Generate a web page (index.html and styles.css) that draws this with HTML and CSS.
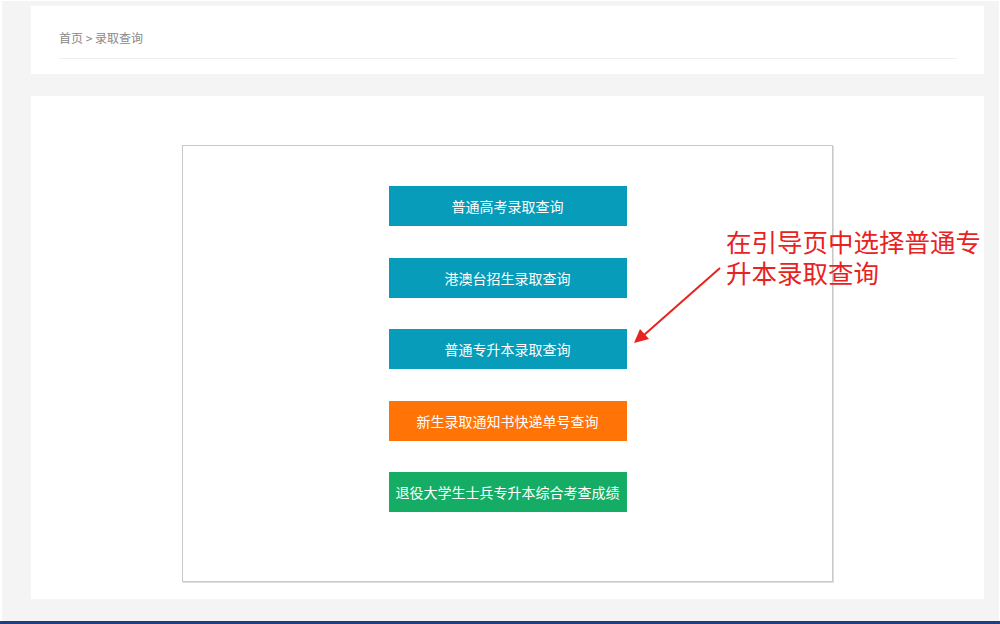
FILE: index.html
```html
<!DOCTYPE html>
<html lang="zh-CN">
<head>
    <meta charset="UTF-8">
    <meta name="viewport" content="width=device-width, initial-scale=1.0">
    <title>录取查询</title>
    <link rel="stylesheet" href="styles.css">
</head>
<body>
    <div class="page">
        <div class="top-card">
            <div class="crumb">首页 &gt; 录取查询</div>
        </div>
        <div class="panel">
            <div class="guide-box">
                <a class="query-btn teal" href="#">普通高考录取查询</a>
                <a class="query-btn teal" href="#">港澳台招生录取查询</a>
                <a class="query-btn teal" href="#">普通专升本录取查询</a>
                <a class="query-btn orange" href="#">新生录取通知书快递单号查询</a>
                <a class="query-btn green" href="#">退役大学生士兵专升本综合考查成绩</a>
            </div>
        </div>
    </div>
    <div class="footer-bar"></div>

    <p class="note">在引导页中选择普通专<br>升本录取查询</p>
    <svg class="note-arrow" width="1000" height="624" viewBox="0 0 1000 624">
        <line x1="720" y1="268" x2="644" y2="335" stroke="#e8221e" stroke-width="2"/>
        <polygon points="634,343 640,329 649,339" fill="#e8221e"/>
    </svg>
</body>
</html>
```

FILE: styles.css
```css
body {
    margin: 0;
    background-color: #fff;
    font-family: "Noto Sans CJK SC", "Noto Sans", sans-serif;
    position: relative;
    height: 624px;
    overflow: hidden;
}
.page {
    background-color: #f4f4f4;
    margin: 1px 1px 0 2px;
    padding: 5px 15px 22px 29px;
}
.top-card {
    background-color: #fff;
    padding: 0 27px 15px 28px;
}
.crumb {
    padding: 22px 0 10px;
    font-size: 12px;
    line-height: 20px;
    color: #888;
    border-bottom: 1px solid #eee;
}
.panel {
    background-color: #fff;
    margin-top: 22px;
    padding: 49px 0 17px;
}
.guide-box {
    width: 649px;
    height: 395px;
    margin: 0 auto;
    border: 1px solid #c9c9c9;
    box-shadow: 1px 1px 0 #dedede;
    display: flex;
    flex-direction: column;
    align-items: center;
    gap: 31.5px;
    padding-top: 40px;
}
.query-btn {
    display: block;
    width: 238px;
    height: 40px;
    line-height: 40px;
    text-align: center;
    color: #fff;
    font-size: 14px;
    text-decoration: none;
    flex-shrink: 0;
}
.teal {
    background-color: #079cb9;
}
.orange {
    background-color: #ff7307;
}
.green {
    background-color: #15ad66;
}
.footer-bar {
    height: 3px;
    background-color: #1b3f80;
}
.note {
    position: absolute;
    left: 726px;
    top: 225px;
    margin: 0;
    font-size: 25.5px;
    line-height: 31px;
    color: #e8221e;
}
.note-arrow {
    position: absolute;
    left: 0;
    top: 0;
}
```
